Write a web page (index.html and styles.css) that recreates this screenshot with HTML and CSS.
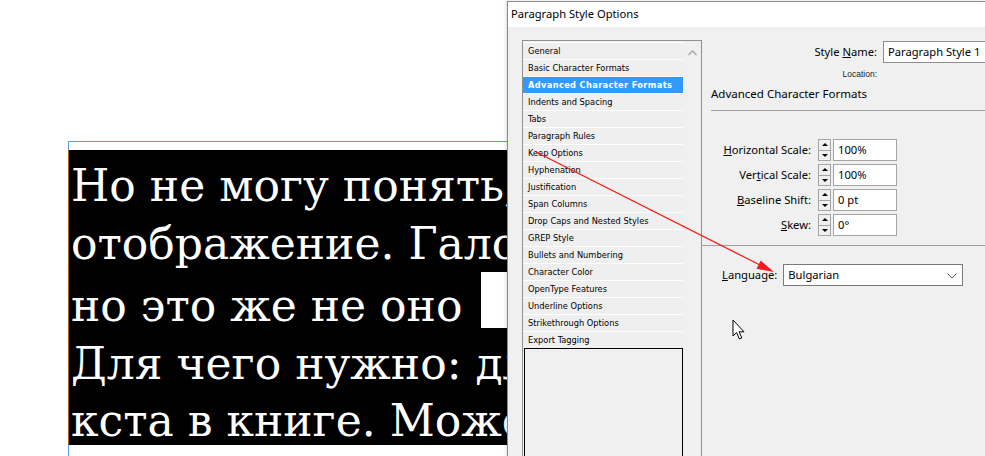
FILE: index.html
```html
<!DOCTYPE html>
<html lang="en">
<head>
<meta charset="utf-8">
<title>Paragraph Style Options</title>
<link rel="stylesheet" href="styles.css">
</head>
<body>
<div class="desk">
  <div class="frame">
    <div class="textbox">
      <div class="ln">Но не могу понять, почему</div>
      <div class="ln">отображение. Галочка стоит,</div>
      <div class="ln">но это же не оно <span class="sel"></span></div>
      <div class="ln">Для чего нужно: для</div>
      <div class="ln">кста в книге. Может</div>
    </div>
  </div>
</div>

<div class="dialog">
  <div class="titlebar">Paragraph Style Options</div>
  <div class="dbody">
    <div class="listbox">
      <div class="items">
        <div class="item">General</div>
        <div class="item">Basic Character Formats</div>
        <div class="item active">Advanced Character Formats</div>
        <div class="item">Indents and Spacing</div>
        <div class="item">Tabs</div>
        <div class="item">Paragraph Rules</div>
        <div class="item">Keep Options</div>
        <div class="item">Hyphenation</div>
        <div class="item">Justification</div>
        <div class="item">Span Columns</div>
        <div class="item">Drop Caps and Nested Styles</div>
        <div class="item">GREP Style</div>
        <div class="item">Bullets and Numbering</div>
        <div class="item">Character Color</div>
        <div class="item">OpenType Features</div>
        <div class="item">Underline Options</div>
        <div class="item">Strikethrough Options</div>
        <div class="item">Export Tagging</div>
        <div class="blank"></div>
      </div>
      <div class="scroll">
        <svg class="chev-up" width="9" height="6" viewBox="0 0 9 6"><polyline points="0.5,5 4.5,1 8.5,5" fill="none" stroke="#a6a6a6" stroke-width="1.4"/></svg>
      </div>
    </div>

    <div class="pane">
      <div class="namerow">
        <div class="lbl-wide">Style <u>N</u>ame:</div>
        <div class="input name">Paragraph Style 1</div>
      </div>
      <div class="locrow">Location:</div>
      <div class="heading">Advanced Character Formats</div>
      <div class="sep"></div>

      <div class="fields">
        <div class="frow">
          <div class="flbl"><u>H</u>orizontal Scale:</div>
          <div class="spin"><span class="up"></span><span class="dn"></span></div>
          <div class="input small">100%</div>
        </div>
        <div class="frow">
          <div class="flbl">Ver<u>t</u>ical Scale:</div>
          <div class="spin"><span class="up"></span><span class="dn"></span></div>
          <div class="input small">100%</div>
        </div>
        <div class="frow">
          <div class="flbl"><u>B</u>aseline Shift:</div>
          <div class="spin"><span class="up"></span><span class="dn"></span></div>
          <div class="input small">0 pt</div>
        </div>
        <div class="frow">
          <div class="flbl"><u>S</u>kew:</div>
          <div class="spin"><span class="up"></span><span class="dn"></span></div>
          <div class="input small">0°</div>
        </div>
      </div>

      <div class="sep2"></div>

      <div class="langrow">
        <div class="llbl"><u>L</u>anguage:</div>
        <div class="select">
          <span>Bulgarian</span>
          <svg class="chev-dn" width="10" height="6" viewBox="0 0 10 6"><polyline points="0.5,0.5 5,5 9.5,0.5" fill="none" stroke="#555" stroke-width="1"/></svg>
        </div>
      </div>
    </div>
  </div>
</div>

<svg class="arrow" width="985" height="456" viewBox="0 0 985 456">
  <line x1="536" y1="152" x2="762" y2="266" stroke="#f01e1e" stroke-width="1.3"/>
  <polygon points="774,272 756.5,268.8 760.7,260.6" fill="#f01e1e"/>
</svg>

<svg class="cursor" width="14" height="22" viewBox="0 0 14 22">
  <path d="M1,1 L1,17 L4.6,13.6 L7.4,20 L9.8,19 L7.1,12.8 L12,12.8 Z" fill="#fff" stroke="#000" stroke-width="1" stroke-linejoin="miter"/>
</svg>
</body>
</html>
```

FILE: styles.css
```css
html, body {
  margin: 0;
  padding: 0;
}
body {
  width: 985px;
  height: 456px;
  overflow: hidden;
  position: relative;
  background: #ffffff;
}

/* ---------- layout canvas ---------- */
.desk {
  padding: 141px 0 0 68px;
}
.frame {
  border-top: 1px solid #5b9bdf;
  border-left: 1px solid #5b9bdf;
  width: 438px;
  height: 314px;
}
.textbox {
  margin: 8px 0 0 -1px;
  width: 440px;
  height: 295px;
  box-sizing: border-box;
  background: #000;
  border-left: 1px solid #a3661a;
  padding: 7px 0 0 2px;
  overflow: hidden;
}
.ln {
  font-family: "DejaVu Serif", serif;
  font-size: 44px;
  line-height: 57.5px;
  color: #fff;
  white-space: nowrap;
}
.sel {
  display: inline-block;
  width: 40px;
  height: 56px;
  margin-left: 5px;
  margin-bottom: -7px;
  background: #fff;
}

/* ---------- dialog window ---------- */
.dialog {
  position: absolute;
  left: 507px;
  top: 1px;
  width: 477px;
  height: 454px;
  border: 1px solid #8a8a8a;
  border-right: none;
  border-bottom: none;
  background: #f0f0f0;
  box-shadow: -1px 0 3px rgba(0,0,0,0.15);
  font-family: "Noto Sans", sans-serif;
  color: #000;
  overflow: hidden;
}
.titlebar {
  height: 25px;
  line-height: 24px;
  background: #fff;
  padding-left: 3px;
  font-size: 11.2px;
}
.dbody {
  display: flex;
  align-items: flex-start;
  padding: 13px 0 0 14px;
}

/* list box */
.listbox {
  display: flex;
  border: 1px solid #8f8f8f;
  border-bottom: none;
  height: 416px;
}
.items {
  width: 160px;
  padding-top: 1px;
  font-family: "DejaVu Sans Condensed", "DejaVu Sans", sans-serif;
  font-stretch: condensed;
  font-size: 9.2px;
  color: #000;
}
.item {
  height: 16px;
  line-height: 16px;
  border-top: 1px solid #fff;
  padding-left: 5px;
  background: #efefef;
  white-space: nowrap;
}
.item.active {
  background: #3399ff;
  color: #fff;
  font-weight: bold;
  letter-spacing: 0.35px;
}
.blank {
  margin: 0 0 0 1px;
  width: 159px;
  height: 120px;
  box-sizing: border-box;
  border: 1px solid #000;
}
.scroll {
  width: 18px;
  display: flex;
  justify-content: center;
  align-items: flex-start;
}
.chev-up {
  margin-top: 9px;
}

/* right pane */
.pane {
  flex: 1;
  font-size: 11.2px;
}
.namerow {
  display: flex;
  margin-top: 1px;
  height: 22px;
}
.lbl-wide {
  width: 175px;
  text-align: right;
  line-height: 21px;
}
.input {
  box-sizing: border-box;
  height: 22px;
  line-height: 20px;
  background: #fff;
  border: 1px solid #a5a5a5;
  padding-left: 4px;
  white-space: nowrap;
  overflow: hidden;
}
.input.name {
  margin-left: 6px;
  flex: 1;
  border-color: #8d8d8d;
  border-right: none;
}
.locrow {
  width: 175px;
  margin-top: 5px;
  height: 12px;
  line-height: 12px;
  text-align: right;
  font-family: "Liberation Sans", sans-serif;
  font-size: 8.5px;
  color: #222;
}
.heading {
  margin-top: 6px;
  padding-left: 9px;
  height: 16px;
  line-height: 16px;
  font-size: 11.5px;
}
.sep {
  margin: 8px 0 0 9px;
  height: 1px;
  background: #a0a0a0;
}
.fields {
  margin-top: 28px;
  display: flex;
  flex-direction: column;
  gap: 3px;
}
.frow {
  display: flex;
  height: 22px;
}
.flbl {
  width: 109px;
  text-align: right;
  line-height: 21px;
  margin-right: 7px;
}
.spin {
  width: 13px;
  height: 22px;
  box-sizing: border-box;
  border: 1px solid #a5a5a5;
  background: #f0f0f0;
  display: flex;
  flex-direction: column;
  margin-right: 2px;
}
.spin span {
  flex: 1;
  display: flex;
  justify-content: center;
  align-items: center;
}
.spin .up {
  border-bottom: 1px solid #a5a5a5;
}
.spin .up::before {
  content: "";
  border-left: 3px solid transparent;
  border-right: 3px solid transparent;
  border-bottom: 3px solid #000;
}
.spin .dn::before {
  content: "";
  border-left: 3px solid transparent;
  border-right: 3px solid transparent;
  border-top: 3px solid #000;
}
.input.small {
  width: 64px;
}
.sep2 {
  margin: 9px 0 0 -1px;
  height: 1px;
  background: #a0a0a0;
}
.langrow {
  display: flex;
  margin-top: 18px;
  padding-left: 20px;
  height: 22px;
}
.llbl {
  line-height: 21px;
  margin-right: 6px;
}
.select {
  width: 180px;
  height: 22px;
  box-sizing: border-box;
  border: 1px solid #7a7a7a;
  background: #fff;
  display: flex;
  align-items: center;
  justify-content: space-between;
  padding: 0 5px 0 4px;
  line-height: 20px;
}
.chev-dn {
  margin-top: 1px;
}

/* overlays */
.arrow {
  position: absolute;
  left: 0;
  top: 0;
  pointer-events: none;
}
.cursor {
  position: absolute;
  left: 732px;
  top: 319px;
}
```
